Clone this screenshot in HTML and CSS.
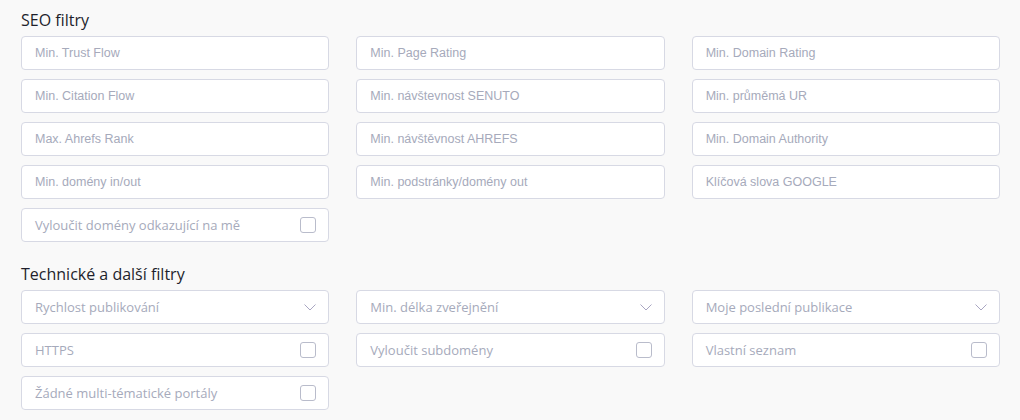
FILE: index.html
```html
<!DOCTYPE html>
<html lang="cs">
<head>
<meta charset="utf-8">
<title>Filtry</title>
<link rel="stylesheet" href="styles.css">
</head>
<body>
<div class="page">
  <h2 class="heading">SEO filtry</h2>
  <div class="grid">
    <input class="field" type="text" placeholder="Min. Trust Flow">
    <input class="field" type="text" placeholder="Min. Page Rating">
    <input class="field" type="text" placeholder="Min. Domain Rating">
    <input class="field" type="text" placeholder="Min. Citation Flow">
    <input class="field" type="text" placeholder="Min. návštevnost SENUTO">
    <input class="field" type="text" placeholder="Min. průměmá UR">
    <input class="field" type="text" placeholder="Max. Ahrefs Rank">
    <input class="field" type="text" placeholder="Min. návštěvnost AHREFS">
    <input class="field" type="text" placeholder="Min. Domain Authority">
    <input class="field" type="text" placeholder="Min. domény in/out">
    <input class="field" type="text" placeholder="Min. podstránky/domény out">
    <input class="field" type="text" placeholder="Klíčová slova GOOGLE">
    <label class="box check"><span>Vyloučit domény odkazující na mě</span><span class="cb"></span></label>
  </div>

  <h2 class="heading second">Technické a další filtry</h2>
  <div class="grid">
    <div class="box select"><span>Rychlost publikování</span><svg class="chev" width="12" height="7" viewBox="0 0 12 7"><path d="M0.5 0.5 L6 6 L11.5 0.5" fill="none" stroke="#a9a6c2" stroke-width="1"/></svg></div>
    <div class="box select"><span>Min. délka zveřejnění</span><svg class="chev" width="12" height="7" viewBox="0 0 12 7"><path d="M0.5 0.5 L6 6 L11.5 0.5" fill="none" stroke="#a9a6c2" stroke-width="1"/></svg></div>
    <div class="box select"><span>Moje poslední publikace</span><svg class="chev" width="12" height="7" viewBox="0 0 12 7"><path d="M0.5 0.5 L6 6 L11.5 0.5" fill="none" stroke="#a9a6c2" stroke-width="1"/></svg></div>
    <label class="box check"><span>HTTPS</span><span class="cb"></span></label>
    <label class="box check"><span>Vyloučit subdomény</span><span class="cb"></span></label>
    <label class="box check"><span>Vlastní seznam</span><span class="cb"></span></label>
    <label class="box check"><span>Žádné multi-tématické portály</span><span class="cb"></span></label>
  </div>
</div>
</body>
</html>
```

FILE: styles.css
```css
html, body {
  margin: 0;
  padding: 0;
  background: #f9f9f9;
}

.page {
  padding: 9px 20px 0 21px;
  font-family: "Open Sans", "Liberation Sans", sans-serif;
}

.heading {
  margin: 0 0 5px 0;
  font-size: 16px;
  font-weight: 400;
  line-height: 22px;
  color: #1e1f2c;
}

.heading.second {
  margin-top: 21px;
}

.grid {
  display: grid;
  grid-template-columns: repeat(3, 1fr);
  column-gap: 27px;
  row-gap: 9px;
}

.field,
.box {
  box-sizing: border-box;
  height: 34px;
  width: 100%;
  margin: 0;
  background: #ffffff;
  border: 1px solid #d7d9e4;
  border-radius: 4px;
}

.field {
  padding: 0 13px;
  font-family: "Liberation Sans", Arial, sans-serif;
  font-size: 12.5px;
  color: #444;
  outline: none;
}

.field::placeholder {
  color: #a6aabb;
  opacity: 1;
}

.box {
  display: flex;
  align-items: center;
  justify-content: space-between;
  padding: 0 12px 0 13px;
  font-family: "Open Sans", sans-serif;
  font-size: 13px;
  color: #a6aabb;
}

.select {
  padding-right: 12px;
}

.chev {
  display: block;
  margin-top: 1px;
}

.cb {
  box-sizing: border-box;
  width: 16px;
  height: 16px;
  border: 1px solid #b9bccb;
  border-radius: 3px;
  background: #fff;
}
```
